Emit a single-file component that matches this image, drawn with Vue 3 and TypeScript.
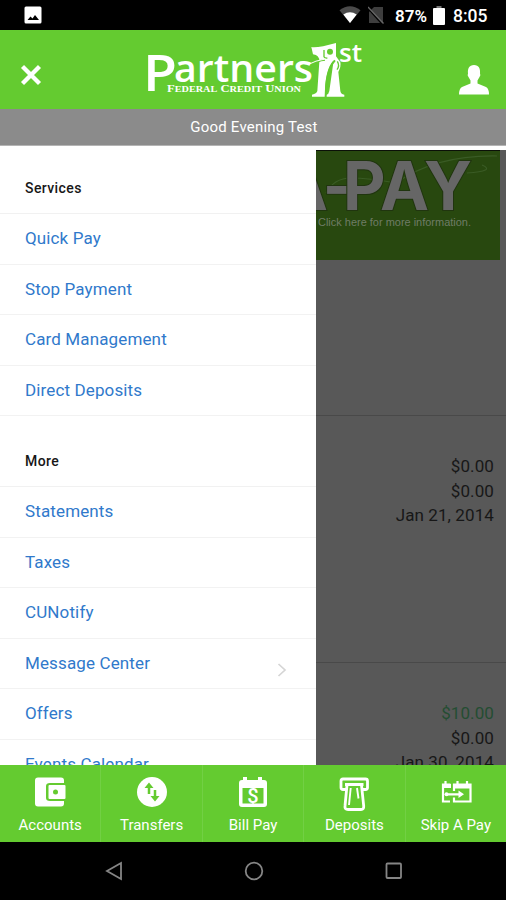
<script setup lang="ts">
interface MenuItem { label: string; chevron?: boolean }
interface MenuGroup { title: string; items: MenuItem[] }

const groups: MenuGroup[] = [
  {
    title: 'Services',
    items: [{ label: 'Quick Pay' }, { label: 'Stop Payment' }, { label: 'Card Management' }, { label: 'Direct Deposits' }],
  },
  {
    title: 'More',
    items: [
      { label: 'Statements' }, { label: 'Taxes' }, { label: 'CUNotify' },
      { label: 'Message Center', chevron: true }, { label: 'Offers' }, { label: 'Events Calendar' },
    ],
  },
]
const tabs: string[] = ['Accounts', 'Transfers', 'Bill Pay', 'Deposits', 'Skip A Pay']
</script>

<template>
  <div class="phone">
    <div class="status">
      <svg class="picture" width="18" height="18" viewBox="0 0 18 18">
        <rect x=".5" y=".5" width="17" height="17" rx="1.500" fill="#fff" />
        <path d="M3.500 14L6.500 10.500L8.500 12.500L11 9L15 14z" fill="#000" />
      </svg>
      <div class="status-right">
        <svg class="wifi" width="22" height="18" viewBox="0 0 22 18">
          <path d="M.5 4.200Q11-3.800 21.500 4.200L11 17z" fill="#4a4a4a" />
          <path d="M4.300 8.600Q11 3.800 17.700 8.600L11 17z" fill="#fff" />
        </svg>
        <svg class="sim" width="16" height="18" viewBox="0 0 16 18">
          <path d="M6 1H15V17H1V6z" fill="#3e3e3e" />
          <path d="M0 2.500L14 18" stroke="#000" stroke-width="1.500" />
          <path d="M0 1L15.500 17.500" stroke="#666" stroke-width="1.300" />
        </svg>
        <span class="pct">87%</span>
        <svg class="battery" width="12" height="19" viewBox="0 0 12 19">
          <path d="M1 2H11Q12 2 12 3V18Q12 19 11 19H1Q0 19 0 18V3Q0 2 1 2z" fill="#fff" />
          <path d="M3.500 0H8.500V2H3.500z" fill="#777" />
        </svg>
        <span class="time">8:05</span>
      </div>
    </div>

    <header class="header">
      <svg class="close" width="22" height="22" viewBox="0 0 22 22">
        <path d="M2.500 2.500L19.500 19.500M19.500 2.500L2.500 19.500" stroke="#fff" stroke-width="4.300" />
      </svg>
      <svg class="logo" width="220" height="60" viewBox="0 0 220 60">
        <text class="cap" x="2" y="50" textLength="34" lengthAdjust="spacingAndGlyphs">P</text>
        <text class="brand" x="33" y="41" textLength="139" lengthAdjust="spacingAndGlyphs">artners</text>
        <text class="fcu" x="26" y="51" textLength="134" lengthAdjust="spacingAndGlyphs">F<tspan class="sc">EDERAL</tspan> C<tspan class="sc">REDIT</tspan> U<tspan class="sc">NION</tspan></text>
        <g transform="translate(149 -6) scale(.3333)">
          <path d="M64 36Q85 39 138 24V64L151 82Q154 94 145 111L151 168Q152 177 163 179V185H108V180Q117 177 118 168L131 76Q106 103 105 168Q104 178 108 185H66V179Q80 176 82 168L88 80Q89 60 69 58z" fill="#fff" />
          <circle cx="120" cy="50" r="9" fill="#64cb30" />
          <path d="M102 45V65Q104 70 112 69" stroke="#64cb30" stroke-width="4" fill="none" />
          <path d="M135 76Q108 104 107 186" stroke="#64cb30" stroke-width="6" fill="none" />
          <path d="M142 79Q150 92 141 104" stroke="#64cb30" stroke-width="4" fill="none" />
          <path d="M63 91Q82 77 105 75" stroke="#64cb30" stroke-width="4" fill="none" />
          <path d="M56 88Q75 77 106 72" stroke="#fff" stroke-width="3" fill="none" />
        </g>
        <text class="st" x="198" y="20.500" textLength="23" lengthAdjust="spacingAndGlyphs">st</text>
      </svg>
      <svg class="user" width="30" height="30" viewBox="0 0 30 30">
        <path d="M15 0C20 0 21.500 4 21 8.500Q22 10 20.500 12L18.500 15.500V18.500L27 22Q30 23.500 30 29.500H0Q0 23.500 3 22L11.500 18.500V15.500L9.500 12Q8 10 9 8.500C8.500 4 10 0 15 0z" fill="#fff" />
      </svg>
    </header>

    <div class="greeting">Good Evening Test</div>

    <main class="content">
      <nav class="drawer">
        <section v-for="g in groups" :key="g.title" class="group">
          <h2>{{ g.title }}</h2>
          <a v-for="item in g.items" :key="item.label" class="item">
            <span>{{ item.label }}</span>
            <svg v-if="item.chevron" class="chevron" width="10" height="14" viewBox="0 0 10 14"><path d="M1.500 1L8 7L1.500 13" fill="none" stroke="#d5d5d5" stroke-width="1.700" /></svg>
          </a>
        </section>
      </nav>
      <div class="page">
        <div class="banner">
          <svg width="184" height="110" viewBox="0 0 184 110">
            <path d="M10 42Q18 27 35 27T80 32Q120 4 181 5M151 22Q180 20 166 14" fill="none" stroke="#3a5b25" stroke-width="1.200" />
            <g class="pay">
              <text x="-38" y="58.500" textLength="50" lengthAdjust="spacingAndGlyphs">A</text>
              <text x="7" y="58.500" textLength="28" lengthAdjust="spacingAndGlyphs">-</text>
              <text x="27" y="58.500" textLength="129" lengthAdjust="spacingAndGlyphs">PAY</text>
            </g>
            <text class="info" x="2" y="75" textLength="153" lengthAdjust="spacingAndGlyphs">Click here for more information.</text>
          </svg>
        </div>
        <section class="account first"><span>$0.00</span><span>$0.00</span><span>Jan 21, 2014</span></section>
        <section class="account"><span class="credit">$10.00</span><span>$0.00</span><span>Jan 30, 2014</span></section>
      </div>
    </main>

    <footer class="tabs">
      <a v-for="(tab, i) in tabs" :key="tab" class="tab">
        <svg width="32" height="38" viewBox="0 0 32 38">
          <template v-if="i === 0">
            <path fill="#fff" d="M4 .5H27Q30 .5 30 3.500V6H16Q12 6 12 9V21Q12 24 16 24H30V26.500Q30 29.500 27 29.500H4Q1 29.500 1 26.500V3.500Q1 .5 4 .5z" />
            <rect x="14.500" y="8" width="17" height="14" rx="1" fill="#fff" />
            <circle cx="21.500" cy="15" r="2.500" fill="#64cb30" />
          </template>
          <template v-else-if="i === 1">
            <circle cx="16" cy="15" r="15" fill="#fff" />
            <path d="M13 17V9M19 13V21" fill="none" stroke="#64cb30" stroke-width="2.500" />
            <path d="M8.500 11L13 5.500L17.500 11zM14.500 19L19 24.500L23.500 19z" fill="#64cb30" />
          </template>
          <template v-else-if="i === 2">
            <path d="M5 3H6V0H10V3H21V0H25V3H27Q30 3 30 6V27Q30 30 27 30H5Q2 30 2 27V6Q2 3 5 3zM5.500 11V26.500H26.500V11z" fill="#fff" fill-rule="evenodd" />
            <text class="dollar" x="16" y="26" text-anchor="middle">$</text>
          </template>
          <template v-else-if="i === 3">
            <g fill="none" stroke="#fff" stroke-width="2.800" stroke-linejoin="round">
              <path d="M8 12.500H5Q3 12.500 3 10.500V4Q3 2 5 2H27.500Q29.500 2 29.500 4V10.500Q29.500 12.500 27.500 12.500H24" />
              <path d="M7 7.500H25.500M9 8L7 29Q6.500 32.500 10 32.500H23Q26 32.500 25.700 29L23.500 8" />
            </g>
            <path d="M12.700 11L11 28M19 11L20.500 21.500" stroke="#fff" stroke-width="1.900" />
          </template>
          <template v-else>
            <g fill="none" stroke="#fff" stroke-width="2.200">
              <path d="M10.500 7.500H3V24.500H10M14 14V7.500H30.500V24.500H14V20.500" />
              <path d="M5.500 4V9M17.500 4V9M27 4V9M6.500 17.300H20" />
            </g>
            <path d="M2 7H11V11H2zM13 7H31V11.500H13zM18.500 13.500L24 17.300L18.500 21z" fill="#fff" />
            <circle cx="6.500" cy="17.300" r="2" fill="#fff" />
          </template>
        </svg>
        <span>{{ tab }}</span>
      </a>
    </footer>

    <div class="system">
      <svg width="18" height="20" viewBox="0 0 18 20"><path d="M16 2V18L2 10z" fill="none" stroke="#858585" stroke-width="1.800" /></svg>
      <svg width="20" height="20" viewBox="0 0 20 20"><circle cx="10" cy="10" r="8.300" fill="none" stroke="#858585" stroke-width="1.800" /></svg>
      <svg width="18" height="18" viewBox="0 0 18 18"><rect x="1.500" y="1.500" width="14.500" height="14.500" rx="1" fill="none" stroke="#858585" stroke-width="1.800" /></svg>
    </div>
  </div>
</template>

<style>
body { margin: 0; }
</style>
<style scoped>
.phone { width: 506px; height: 900px; display: flex; flex-direction: column; overflow: hidden; background: #000; font-family: Roboto, sans-serif; }
.phone > * { box-sizing: border-box; flex-shrink: 0; }
svg { display: block; flex-shrink: 0; }
.status { height: 30px; display: flex; justify-content: space-between; padding: 6px 18px 0 24px; color: #fff; }
.status-right { display: flex; }
.sim { margin-left: 7px; }
.pct { margin-left: 11px; width: 33px; font-size: 17px; line-height: 20px; font-weight: 600; }
.battery { margin-left: 5px; }
.time { margin-left: 8px; width: 35px; font-size: 17.500px; line-height: 20px; font-weight: 500; }
.header { height: 79px; background: #64cb30; display: flex; padding: 0 17px 0 20px; }
.close { margin-top: 34px; }
.logo { margin: 11px 0 0 99px; overflow: visible; }
.brand { font: 600 37px 'Open Sans', sans-serif; fill: #fff; }
.cap { font: 600 50px 'Open Sans', sans-serif; fill: #fff; }
.fcu { font: 700 10.500px 'Liberation Serif', serif; fill: #fff; }
.sc { font-size: 8.500px; }
.st { font: 600 25px 'Open Sans', sans-serif; fill: #fff; }
.user { margin: 35px 0 0 auto; }
.greeting { height: 37px; background: #8b8b8b; border-bottom: 1px solid #b4b4b4; color: #fff; text-align: center; font-size: 15px; line-height: 36px; letter-spacing: .2px; padding-left: 2px; }
.content { height: 619px; display: flex; overflow: hidden; background: #fff; }
.drawer { width: 316px; flex-shrink: 0; background: #fff; }
.group { padding-top: 24px; }
.group + .group { padding-top: 27px; }
h2 { margin: 0; height: 43px; border-bottom: 1px solid #f1f1f1; padding-left: 25px; font-size: 14px; line-height: 36px; font-weight: 500; letter-spacing: .4px; color: #171717; }
.item { height: 49.500px; border-bottom: 1px solid #f2f2f2; display: flex; justify-content: space-between; padding: 0 29px 0 25px; font-size: 17px; line-height: 49px; letter-spacing: .13px; color: #3079cb; }
.chevron { margin-top: 24px; }
.page { width: 190px; flex-shrink: 0; margin-top: 4px; background: #585858; }
.banner { width: 184px; height: 110px; box-sizing: border-box; background: #28480f; border-top: 1px solid #0b1007; overflow: hidden; }
.pay { font: 700 67px Inter, sans-serif; fill: #666; stroke: #20350f; stroke-width: 2px; paint-order: stroke; }
.info { font: 11px 'Liberation Sans', sans-serif; fill: #6f7c66; }
.account { height: 247px; box-sizing: border-box; border-top: 1px solid #494949; display: flex; flex-direction: column; align-items: flex-end; padding: 38px 12px 0 0; font-size: 17px; line-height: 24.700px; letter-spacing: .1px; color: #171717; }
.first { margin-top: 155px; }
.credit { color: #244d32; }
.tabs { height: 77px; background: #64cb30; display: flex; }
.tab { flex: 1; box-sizing: border-box; border-right: 1px solid #72d044; display: flex; flex-direction: column; align-items: center; padding-top: 12px; color: #fff; font-size: 15px; }
.tab:last-child { border: 0; }
.tab span { line-height: 20px; }
.dollar { font: 500 20px Roboto, sans-serif; fill: #fff; }
.system { height: 58px; display: flex; justify-content: space-between; align-items: center; padding: 0 103px 0 105px; }
</style>
